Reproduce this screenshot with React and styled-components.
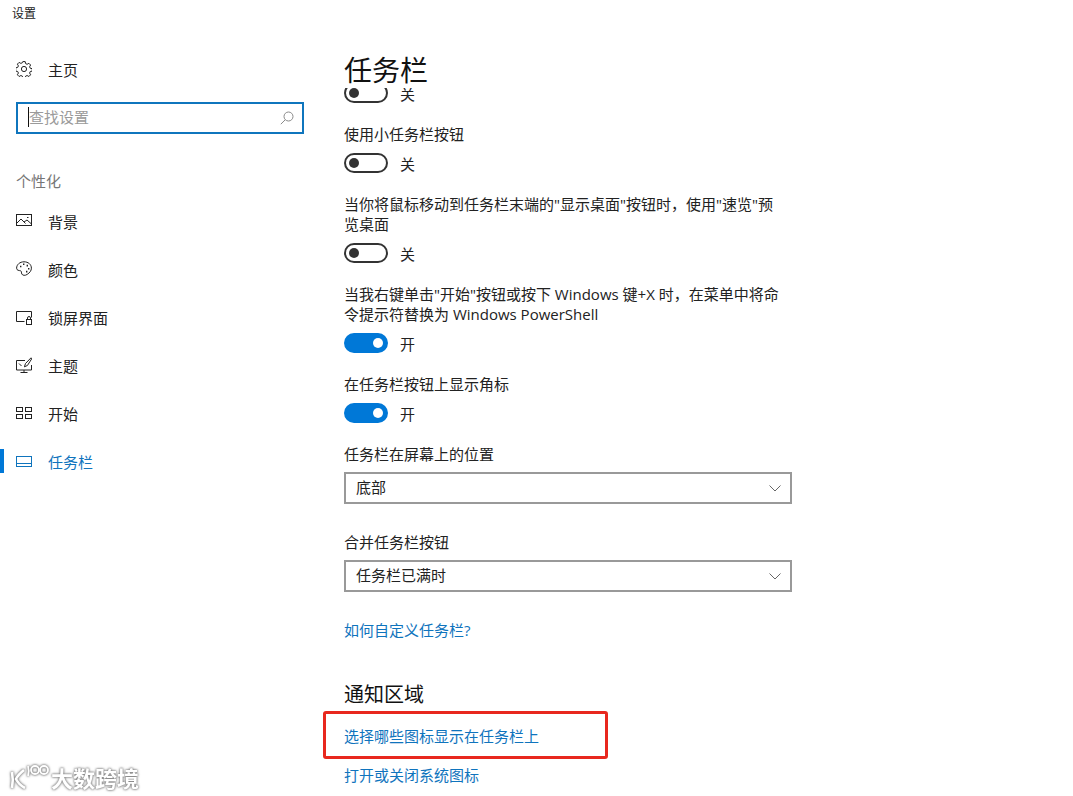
import React from "react";
import styled, { createGlobalStyle } from "styled-components";

const FONT = `"Open Sans", "Noto Sans CJK SC", sans-serif`;
const BLUE = "#0078d7";
const LINK = "#0f74bd";

const GlobalStyle = createGlobalStyle`
  html, body {
    margin: 0;
    padding: 0;
    background: #fff;
  }
  body {
    font-family: ${FONT};
    color: #1a1a1a;
    overflow: hidden;
  }
`;

const Page = styled.div`
  position: relative;
  width: 1073px;
  height: 796px;
  display: flex;
  overflow: hidden;
  background: #fff;
`;

const Sidebar = styled.aside`
  width: 344px;
  flex-shrink: 0;
  display: flex;
  flex-direction: column;
`;
const WindowTitle = styled.div`
  height: 45px;
  padding: 6px 0 0 12px;
  box-sizing: border-box;
  font-size: 12px;
  line-height: 16px;
  color: #222;
`;
const NavRow = styled.div`
  position: relative;
  height: 48px;
  display: flex;
  align-items: center;
  gap: 16px;
  padding-left: 16px;
  font-size: 15px;
  color: ${(p) => (p.$active ? LINK : "#222")};
  &::before {
    content: "";
    display: ${(p) => (p.$active ? "block" : "none")};
    position: absolute;
    left: 0;
    top: 12px;
    width: 4px;
    height: 24px;
    background: ${BLUE};
  }
  svg {
    width: 16px;
    height: 16px;
    flex-shrink: 0;
    fill: none;
    stroke: currentColor;
    stroke-width: 1;
  }
`;
const SearchBox = styled.div`
  width: 288px;
  height: 32px;
  margin: 9px 0 0 16px;
  box-sizing: border-box;
  border: 2px solid #0f75bd;
  display: flex;
  align-items: center;
  justify-content: space-between;
  padding: 0 8px 0 10px;
  font-size: 15px;
  color: #9a9a9a;
  span {
    border-left: 1px solid #111;
    line-height: 20px;
    margin-bottom: 2px;
  }
  svg {
    width: 14px;
    height: 14px;
    fill: none;
    stroke: #8a8a8a;
    stroke-width: 1;
  }
`;
const GroupLabel = styled.div`
  margin: 37px 0 6px 16px;
  height: 20px;
  line-height: 20px;
  font-size: 15px;
  color: #767676;
`;

const Main = styled.main`
  width: 448px;
  display: flex;
  flex-direction: column;
  height: 796px;
`;
const PageTitle = styled.h1`
  flex-shrink: 0;
  height: 88px;
  margin: 0;
  padding-top: 50px;
  box-sizing: border-box;
  font-size: 28px;
  font-weight: 400;
  line-height: 40px;
  color: #111;
`;
const Scroller = styled.div`
  flex: 1;
  overflow: hidden;
`;
const Content = styled.div`
  margin-top: -2px;
  display: flex;
  flex-direction: column;
`;
const Label = styled.div`
  font-size: 15px;
  line-height: 20px;
  color: #222;
  margin-top: ${(p) => p.$top ?? 21}px;
`;
const ToggleRow = styled.div`
  display: flex;
  align-items: center;
  gap: 12px;
  height: 20px;
  margin-top: 9px;
  font-size: 15px;
  color: #222;
`;
const ClippedToggleRow = styled(ToggleRow)`
  margin-top: -3px;
`;
const Track = styled.div`
  width: 44px;
  height: 20px;
  box-sizing: border-box;
  border-radius: 10px;
  border: 2px solid ${(p) => (p.$on ? BLUE : "#333")};
  background: ${(p) => (p.$on ? BLUE : "#fff")};
  display: flex;
  align-items: center;
  justify-content: ${(p) => (p.$on ? "flex-end" : "flex-start")};
  padding: 0 3px;
  &::after {
    content: "";
    width: 10px;
    height: 10px;
    border-radius: 50%;
    background: ${(p) => (p.$on ? "#fff" : "#333")};
  }
`;
const Select = styled.div`
  width: 448px;
  height: 32px;
  box-sizing: border-box;
  margin-top: 8px;
  border: 2px solid #999;
  display: flex;
  align-items: center;
  justify-content: space-between;
  padding: 0 9px 4px 10px;
  font-size: 15px;
  color: #222;
  svg {
    width: 12px;
    height: 7px;
    margin-top: 4px;
    fill: none;
    stroke: #666;
    stroke-width: 1;
  }
`;
const TextLink = styled.div`
  font-size: 15px;
  line-height: 20px;
  color: ${LINK};
  margin-top: ${(p) => p.$top}px;
`;
const SectionTitle = styled.h2`
  margin: 40px 0 0;
  font-size: 20px;
  font-weight: 400;
  line-height: 30px;
  color: #111;
`;

const Callout = styled.div`
  position: absolute;
  left: 323px;
  top: 711px;
  width: 285px;
  height: 48px;
  box-sizing: border-box;
  border: 3px solid #e8281e;
  border-radius: 3px;
`;
const Watermark = styled.div`
  position: absolute;
  left: 9px;
  top: 760px;
  display: flex;
  align-items: center;
  gap: 2px;
  color: #fff;
  filter: drop-shadow(0 0 1px #777) drop-shadow(0 0 1px #aaa);
`;
const MarkLogo = styled.svg`
  width: 40px;
  height: 30px;
  fill: none;
  stroke: #fff;
  stroke-width: 2.6;
`;
const MarkText = styled.span`
  font-size: 22px;
  font-weight: 700;
  line-height: 30px;
  margin-top: 3px;
`;

const navItems = [
  {
    name: "背景",
    icon: (
      <>
        <rect x="0.5" y="1.5" width="15" height="11" />
        <path d="M.5 10.5 5 6l4.5 4.5M8 9l3-2 4.5 4M11 4.5h1.5" />
      </>
    ),
  },
  {
    name: "颜色",
    icon: (
      <>
        <path d="M8 .8C3.8.8.6 3.6.6 7.2c0 2.4 2.6 2.2 4 2.6 1.2.4.6 2 1.2 3.2.8 1.6 3.4 1.8 5.4.4 2.6-1.6 4.2-3.8 4.2-6.2C15.4 3.4 12.2.8 8 .8Z" />
        <path
          d="M4 5.5h1.4M7 3.2h1.4M10.6 4.6H12M12 7.8h1.4M10 10.6h1.4"
          strokeWidth="1.6"
        />
      </>
    ),
  },
  {
    name: "锁屏界面",
    icon: (
      <>
        <path d="M8.5 12.5H.5v-10h15v6" />
        <rect x="10.5" y="10.5" width="5" height="5" />
        <path d="M11.5 10.5V9a1.5 1.5 0 0 1 3 0v1.5" />
      </>
    ),
  },
  {
    name: "主题",
    icon: (
      <>
        <path d="M9 3.5H.5v9.5h15V8M8 13v2M4.5 15.5h7" />
        <path d="M15 .8 9.5 6.5 8.4 9.8l3-1.3L15.6 2Z" />
        <path d="M3 6.5 5.5 9" />
      </>
    ),
  },
  {
    name: "开始",
    icon: (
      <>
        <rect x="0.5" y="2.5" width="6" height="4" />
        <rect x="9.5" y="2.5" width="6" height="4" />
        <rect x="0.5" y="9.5" width="6" height="4" />
        <rect x="9.5" y="9.5" width="6" height="4" />
      </>
    ),
  },
  {
    name: "任务栏",
    active: true,
    icon: (
      <>
        <rect x="0.5" y="3.5" width="15" height="10" />
        <path d="M.5 10.5h15" />
      </>
    ),
  },
];

const Chevron = () => (
  <svg viewBox="0 0 12 7">
    <path d="M.5.5 6 6 11.5.5" />
  </svg>
);

const Toggle = ({ on }) => (
  <ToggleRow>
    <Track $on={on} />
    {on ? "开" : "关"}
  </ToggleRow>
);

export default function App() {
  return (
    <Page>
      <GlobalStyle />
      <Sidebar>
        <WindowTitle>设置</WindowTitle>
        <NavRow>
          <svg viewBox="0 0 16 16">
            <circle cx="8" cy="8" r="2.6" />
            <path d="M6.8.6h2.4l.4 2 1.5.7 1.8-1 1.7 1.7-1 1.8.7 1.5 2 .4v2.4l-2 .4-.7 1.5 1 1.8-1.7 1.7-1.8-1-1.5.7-.4 2H6.8l-.4-2-1.5-.7-1.8 1-1.7-1.7 1-1.8-.7-1.5-2-.4V6.8l2-.4.7-1.5-1-1.8 1.7-1.7 1.8 1 1.5-.7Z" />
          </svg>
          主页
        </NavRow>
        <SearchBox>
          <span>查找设置</span>
          <svg viewBox="0 0 14 14">
            <circle cx="8.5" cy="5.5" r="4.5" />
            <path d="M5.2 8.8.8 13.2" />
          </svg>
        </SearchBox>
        <GroupLabel>个性化</GroupLabel>
        {navItems.map((item) => (
          <NavRow key={item.name} $active={item.active}>
            <svg viewBox="0 0 16 16">{item.icon}</svg>
            {item.name}
          </NavRow>
        ))}
      </Sidebar>
      <Main>
        <PageTitle>任务栏</PageTitle>
        <Scroller>
          <Content>
            <ClippedToggleRow>
              <Track />关
            </ClippedToggleRow>
            <Label>使用小任务栏按钮</Label>
            <Toggle />
            <Label>
              当你将鼠标移动到任务栏末端的"显示桌面"按钮时，使用"速览"预
              <br />
              览桌面
            </Label>
            <Toggle />
            <Label>
              当我右键单击"开始"按钮或按下 Windows 键+X 时，在菜单中将命
              <br />
              令提示符替换为 Windows PowerShell
            </Label>
            <Toggle on />
            <Label>在任务栏按钮上显示角标</Label>
            <Toggle on />
            <Label>任务栏在屏幕上的位置</Label>
            <Select>
              底部
              <Chevron />
            </Select>
            <Label $top={28}>合并任务栏按钮</Label>
            <Select>
              任务栏已满时
              <Chevron />
            </Select>
            <TextLink $top={28}>如何自定义任务栏?</TextLink>
            <SectionTitle>通知区域</SectionTitle>
            <TextLink $top={16}>选择哪些图标显示在任务栏上</TextLink>
            <TextLink $top={19}>打开或关闭系统图标</TextLink>
          </Content>
        </Scroller>
      </Main>
      <Callout />
      <Watermark>
        <MarkLogo viewBox="0 0 40 30">
          <path d="M3 10c1 5 1 10 0 16M15 8C10 12 8 15 7 17c2 4 5 7 9 9" />
          <path d="M19 4c1 3 1 6 0 10" strokeWidth="1.8" />
          <circle cx="26" cy="8" r="4" strokeWidth="1.8" />
          <circle cx="35" cy="8" r="4" strokeWidth="1.8" />
        </MarkLogo>
        <MarkText>大数跨境</MarkText>
      </Watermark>
    </Page>
  );
}
